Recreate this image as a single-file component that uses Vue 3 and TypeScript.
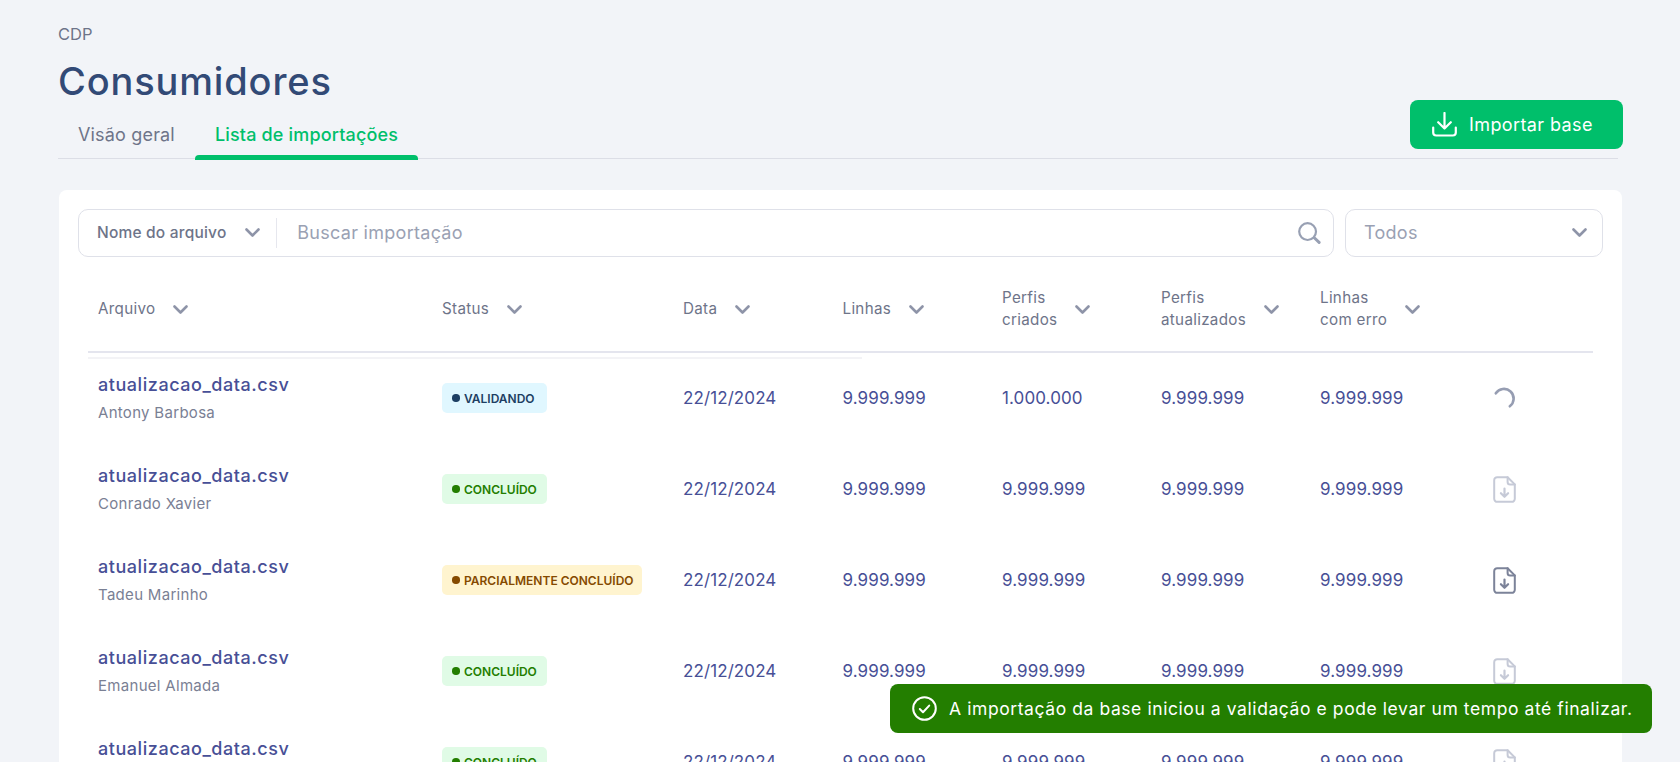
<script setup lang="ts">
interface Row {
  person: string
  label: string
  tone: 'info' | 'ok' | 'warn'
  created: string
  action: 'spin' | 'light' | 'dark'
}

const columns: { lines: string[] }[] = [
  { lines: ['Arquivo'] },
  { lines: ['Status'] },
  { lines: ['Data'] },
  { lines: ['Linhas'] },
  { lines: ['Perfis', 'criados'] },
  { lines: ['Perfis', 'atualizados'] },
  { lines: ['Linhas', 'com erro'] },
]

const rows: Row[] = [
  { person: 'Antony Barbosa', label: 'Validando', tone: 'info', created: '1.000.000', action: 'spin' },
  { person: 'Conrado Xavier', label: 'Concluído', tone: 'ok', created: '9.999.999', action: 'light' },
  { person: 'Tadeu Marinho', label: 'Parcialmente concluído', tone: 'warn', created: '9.999.999', action: 'dark' },
  { person: 'Emanuel Almada', label: 'Concluído', tone: 'ok', created: '9.999.999', action: 'light' },
  { person: '', label: 'Concluído', tone: 'ok', created: '9.999.999', action: 'light' },
]
</script>

<template>
  <div class="page">
    <div class="crumb">CDP</div>
    <h1 class="title">Consumidores</h1>

    <div class="tabbar">
      <div class="tabs">
        <span class="tab">Visão geral</span>
        <span class="tab active">Lista de importações</span>
      </div>
      <button class="import" type="button">
        <svg width="25" height="25" viewBox="0 0 25 25" fill="none" stroke="#fff" stroke-width="2.2" stroke-linecap="round" stroke-linejoin="round">
          <path d="M1.2 15.5v5a3 3 0 0 0 3 3h16.6a3 3 0 0 0 3-3v-5" />
          <path d="M12.5 1v15.5M6.2 10.2l6.3 6.3 6.3-6.3" />
        </svg>
        <span>Importar base</span>
      </button>
    </div>

    <section class="card">
      <div class="filters">
        <div class="search">
          <div class="field-select">
            <span>Nome do arquivo</span>
            <svg class="chev" width="15" height="9" viewBox="0 0 15 9" fill="none" stroke="#8e94a8" stroke-width="2.6" stroke-linecap="round" stroke-linejoin="round"><path d="M1.5 1.5l6 6 6-6" /></svg>
          </div>
          <div class="divider"></div>
          <span class="placeholder">Buscar importação</span>
          <svg class="lens" width="23" height="22" viewBox="0 0 23 22" fill="none" stroke="#98a0b3" stroke-linecap="round">
            <circle cx="9.6" cy="9.6" r="8.4" stroke-width="2.2" />
            <path d="M16.5 16l4.6 4.4" stroke-width="3" />
          </svg>
        </div>
        <div class="status-select">
          <span class="placeholder">Todos</span>
          <svg width="15" height="9" viewBox="0 0 15 9" fill="none" stroke="#8e94a8" stroke-width="2.6" stroke-linecap="round" stroke-linejoin="round"><path d="M1.5 1.5l6 6 6-6" /></svg>
        </div>
      </div>

      <div class="table">
        <div class="head grid">
          <div v-for="col in columns" :key="col.lines.join()" class="th">
            <div class="th-text">
              <div v-for="line in col.lines" :key="line">{{ line }}</div>
            </div>
            <svg width="15" height="9" viewBox="0 0 15 9" fill="none" stroke="#8e94a8" stroke-width="2.6" stroke-linecap="round" stroke-linejoin="round"><path d="M1.5 1.5l6 6 6-6" /></svg>
          </div>
          <div></div>
        </div>
        <div class="scroll-line"></div>

        <div v-for="(row, index) in rows" :key="index" class="row grid">
          <div class="cell file">
            <div class="name">atualizacao_data.csv</div>
            <div class="person">{{ row.person }}</div>
          </div>
          <div class="cell">
            <span class="badge" :class="row.tone">
              <i class="dot"></i>{{ row.label }}
            </span>
          </div>
          <div class="cell value date">22/12/2024</div>
          <div class="cell value">9.999.999</div>
          <div class="cell value">{{ row.created }}</div>
          <div class="cell value">9.999.999</div>
          <div class="cell value">9.999.999</div>
          <div class="cell action">
            <svg v-if="row.action === 'spin'" width="23" height="23" viewBox="0 0 23 23" fill="none" stroke="#969db2" stroke-width="2.6" stroke-linecap="round">
              <path d="M2.8 6.3A9.7 9.7 0 1 1 16.8 19.3" />
            </svg>
            <svg v-else width="23" height="27" viewBox="0 0 23 27" fill="none" :stroke="row.action === 'dark' ? '#7c8399' : '#c6cad7'" stroke-width="2" stroke-linecap="round" stroke-linejoin="round">
              <path d="M4.2 1.2h10.4l7.2 7.2v14.4a3 3 0 0 1-3 3H4.2a3 3 0 0 1-3-3V4.2a3 3 0 0 1 3-3z" />
              <path d="M14.6 1.2v4.7a2.5 2.5 0 0 0 2.5 2.5h4.7" />
              <path d="M11.5 12.6v8M7.9 17.2l3.6 3.6 3.6-3.6" stroke-width="2.2" />
            </svg>
          </div>
        </div>
      </div>
    </section>

    <div class="toast">
      <svg width="25" height="25" viewBox="0 0 25 25" fill="none" stroke="#fff" stroke-width="2" stroke-linecap="round" stroke-linejoin="round">
        <circle cx="12.5" cy="12.5" r="11.3" />
        <path d="M7.8 13l3.2 3.2 6.2-6.6" />
      </svg>
      <span>A importação da base iniciou a validação e pode levar um tempo até finalizar.</span>
    </div>
  </div>
</template>

<style>
html, body {
  margin: 0;
  height: 100%;
  overflow: hidden;
  background: #f2f4f8;
}
</style>

<style scoped>
.page {
  position: relative;
  box-sizing: border-box;
  height: 762px;
  overflow: hidden;
  padding: 24px 62px 0 58px;
  background: #f2f4f8;
  font-family: Inter, "Noto Sans", sans-serif;
  color: #6e7489;
}
.crumb {
  font-size: 16.5px;
  line-height: 20px;
  color: #6e7489;
}
.title {
  margin: 11.5px 0 0;
  font-size: 38px;
  line-height: 50px;
  font-weight: 500;
  letter-spacing: 0.85px;
  color: #324a76;
}
.tabbar {
  display: flex;
  justify-content: space-between;
  align-items: flex-start;
  height: 52.5px;
  border-bottom: 1.5px solid #dcdee6;
}
.tabs {
  display: flex;
  height: 54px;
}
.tab {
  position: relative;
  padding: 17.5px 20px 0;
  font-size: 18px;
  line-height: 24px;
  letter-spacing: 0.17px;
  color: #6e7489;
  white-space: nowrap;
}
.tab.active {
  color: #00bf6b;
  font-weight: 500;
}
.tab.active::after {
  content: "";
  position: absolute;
  left: 0;
  right: 0;
  bottom: 0;
  height: 5px;
  border-radius: 4px 4px 0 0;
  background: #00bf6b;
}
.import {
  display: flex;
  align-items: center;
  gap: 12px;
  box-sizing: border-box;
  width: 213px;
  height: 49px;
  margin: -5.5px -5px 0 0;
  padding: 0 0 0 22px;
  border: 0;
  border-radius: 8px;
  background: #00bf6b;
  color: #fff;
  font-family: inherit;
  font-size: 18px;
  letter-spacing: 0.4px;
  white-space: nowrap;
}
.card {
  box-sizing: border-box;
  width: 1563px;
  margin: 30.5px 0 0 1px;
  padding: 19px 19px 0;
  border-radius: 8px;
  background: #fff;
  height: 700px;
}
.filters {
  display: flex;
  gap: 11px;
}
.search,
.status-select {
  box-sizing: border-box;
  display: flex;
  align-items: center;
  height: 48.5px;
  border: 1.5px solid #dfe1e9;
  border-radius: 10px;
}
.search {
  width: 1256px;
  padding: 0 12px 0 18px;
}
.field-select {
  display: flex;
  align-items: center;
  width: 179.3px;
  justify-content: space-between;
  padding-right: 16px;
  box-sizing: border-box;
  font-size: 15.5px;
  letter-spacing: 0.2px;
  font-weight: 500;
  color: #6e7489;
  white-space: nowrap;
}
.divider {
  width: 1px;
  height: 30px;
  background: #e6e7ee;
}
.placeholder {
  font-size: 18px;
  letter-spacing: 0.28px;
  color: #9aa1b3;
}
.search .placeholder {
  margin-left: 20px;
  flex: 1;
}
.status-select {
  width: 258px;
  justify-content: space-between;
  padding: 0 15px 0 18px;
}
.table {
  position: relative;
  width: 1505px;
  margin: 9px 0 0 10px;
}
.grid {
  display: grid;
  grid-template-columns: 344px 241px 159.5px 159.5px 159px 159px 159.5px 1fr;
}
.head {
  align-items: center;
  border-bottom: 2px solid #e4e5ee;
  box-sizing: border-box;
  height: 86.5px;
}
.th {
  display: flex;
  align-items: center;
  gap: 18px;
  padding: 2px 0 0 10px;
  font-size: 15.2px;
  letter-spacing: 0.3px;
  line-height: 22px;
  color: #6e7489;
}
.scroll-line {
  position: absolute;
  top: 90.5px;
  left: 0;
  width: 774px;
  height: 2px;
  background: #f3f3f6;
}
.row {
  height: 91px;
  align-items: center;
}
.cell {
  padding-left: 10px;
}
.name {
  font-size: 18px;
  line-height: 24px;
  letter-spacing: 0.55px;
  font-weight: 500;
  color: #474f96;
  white-space: nowrap;
}
.person {
  min-height: 20px;
  margin-top: 6px;
  font-size: 15px;
  line-height: 20px;
  letter-spacing: 0.3px;
  color: #7a8094;
  white-space: nowrap;
}
.value {
  font-size: 17px;
  letter-spacing: 0.1px;
  color: #474f96;
}
.badge {
  display: inline-flex;
  align-items: center;
  box-sizing: border-box;
  height: 29.5px;
  padding: 0 10px;
  border-radius: 5px;
  font-size: 12px;
  font-weight: 600;
  text-transform: uppercase;
  white-space: nowrap;
}
.dot {
  width: 7.5px;
  height: 7.5px;
  margin-right: 4.5px;
  border-radius: 50%;
  background: currentColor;
}
.badge.info { background: #e0f7ff; color: #1d3f63; padding-right: 12px; }
.badge.ok { background: #e0fbe6; color: #237e00; padding-right: 10.5px; }
.badge.warn { background: #fff4cf; color: #854a00; padding-right: 8px; }
.action {
  padding-left: 23px;
  display: flex;
  align-items: center;
}
.toast {
  position: absolute;
  left: 890px;
  top: 684px;
  display: flex;
  align-items: center;
  gap: 12px;
  box-sizing: border-box;
  width: 762px;
  height: 49px;
  padding-left: 22px;
  border-radius: 8px;
  background: #237e00;
  color: #fff;
  font-size: 17.5px;
  letter-spacing: 0.58px;
  white-space: nowrap;
}
</style>
